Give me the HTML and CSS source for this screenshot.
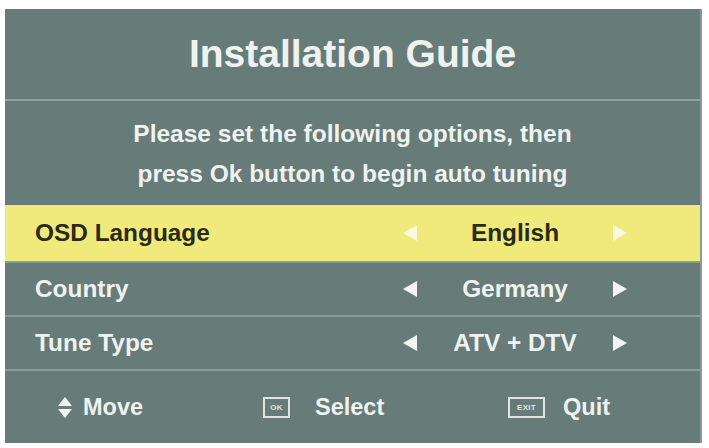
FILE: index.html
```html
<!DOCTYPE html>
<html lang="en">
<head>
<meta charset="utf-8">
<title>Installation Guide</title>
<link rel="stylesheet" href="styles.css">
</head>
<body>
<div class="panel">
  <div class="title">Installation Guide</div>
  <div class="intro">
    <div>Please set the following options, then</div>
    <div>press Ok button to begin auto tuning</div>
  </div>
  <div class="row active">
    <span class="label">OSD Language</span>
    <span class="arrow left"></span>
    <span class="value">English</span>
    <span class="arrow right"></span>
  </div>
  <div class="row">
    <span class="label">Country</span>
    <span class="arrow left"></span>
    <span class="value">Germany</span>
    <span class="arrow right"></span>
  </div>
  <div class="row">
    <span class="label">Tune Type</span>
    <span class="arrow left"></span>
    <span class="value">ATV + DTV</span>
    <span class="arrow right"></span>
  </div>
  <div class="footer">
    <div class="hint">
      <span class="updown"><span class="up"></span><span class="down"></span></span>
      <span>Move</span>
    </div>
    <div class="hint">
      <span class="key key-ok">OK</span>
      <span>Select</span>
    </div>
    <div class="hint">
      <span class="key key-exit">EXIT</span>
      <span>Quit</span>
    </div>
  </div>
</div>
</body>
</html>
```
FILE: styles.css
```css
html, body {
  margin: 0;
  padding: 0;
  background: #ffffff;
}
body {
  font-family: "Liberation Sans", Arial, sans-serif;
  font-weight: bold;
  color: #eef3ef;
}
.panel {
  margin: 9px 0 0 5px;
  width: 697px;
  height: 434px;
  background: #677b79;
  display: flex;
  flex-direction: column;
  box-sizing: border-box;
  border-right: 2px solid #8a9c99;
}
.title {
  height: 90px;
  display: flex;
  align-items: center;
  justify-content: center;
  font-size: 39px;
  border-bottom: 2px solid #8fa29f;
}
.intro {
  height: 104px;
  display: flex;
  flex-direction: column;
  align-items: center;
  justify-content: center;
  font-size: 24.5px;
  line-height: 40px;
  padding-top: 2px;
  box-sizing: border-box;
}
.row {
  display: grid;
  grid-template-columns: 1fr 24px 186px 24px;
  align-items: center;
  padding: 0 68px 0 30px;
  height: 52px;
  font-size: 24.4px;
  border-top: 2px solid #8a9c99;
}
.row.active {
  height: 56px;
  border-top: 0;
  background: #f0e97c;
  color: #2a2a18;
}
.value {
  text-align: center;
}
.arrow {
  justify-self: center;
  width: 0;
  height: 0;
  border-top: 8px solid transparent;
  border-bottom: 8px solid transparent;
}
.arrow.left {
  border-right: 14px solid #f1f4f2;
}
.arrow.right {
  border-left: 14px solid #f1f4f2;
}
.row.active .arrow.left {
  border-right-color: #fbf8de;
}
.row.active .arrow.right {
  border-left-color: #fbf8de;
}
.footer {
  flex: 1;
  border-top: 2px solid #8a9c99;
  display: grid;
  grid-template-columns: 205px 245px auto;
  align-items: center;
  padding: 0 0 0 53px;
  font-size: 23.5px;
}
.hint {
  display: flex;
  align-items: center;
  gap: 11px;
}
.updown {
  display: flex;
  flex-direction: column;
  gap: 3px;
}
.up, .down {
  width: 0;
  height: 0;
  border-left: 7px solid transparent;
  border-right: 7px solid transparent;
}
.up {
  border-bottom: 9px solid #eef3ef;
}
.down {
  border-top: 9px solid #eef3ef;
}
.key {
  display: inline-flex;
  align-items: center;
  justify-content: center;
  height: 21px;
  box-sizing: border-box;
  border: 2px solid #dfe6e2;
  font-size: 8px;
  font-weight: bold;
  letter-spacing: 0.3px;
  color: #dfe6e2;
}
.key-ok {
  width: 27px;
  margin-right: 14px;
}
.key-exit {
  width: 37px;
  margin-right: 7px;
}
```
